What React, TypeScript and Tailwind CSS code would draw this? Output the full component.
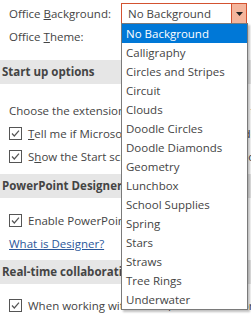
import React from "react";

const options = [
  "No Background",
  "Calligraphy",
  "Circles and Stripes",
  "Circuit",
  "Clouds",
  "Doodle Circles",
  "Doodle Diamonds",
  "Geometry",
  "Lunchbox",
  "School Supplies",
  "Spring",
  "Stars",
  "Straws",
  "Tree Rings",
  "Underwater",
];

const Check: React.FC = () => (
  <svg width="13" height="13" viewBox="0 0 13 13" className="shrink-0">
    <rect x="0.5" y="0.5" width="12" height="12" fill="#fff" stroke="#555" />
    <path d="M3 6.5 L5.3 9 L10 3.6" fill="none" stroke="#555" strokeWidth="1.2" />
  </svg>
);

const CheckRow: React.FC<{ children: React.ReactNode }> = ({ children }) => (
  <div className="flex items-center gap-[6px] h-[23px] pl-[9px] whitespace-nowrap">
    <Check />
    <span>{children}</span>
  </div>
);

const Header: React.FC<{ title: string }> = ({ title }) => (
  <div className="h-[24px] flex items-center pl-[2px] bg-[#e6e6e6] font-bold text-[#444] whitespace-nowrap">
    {title}
  </div>
);

export default function App() {
  return (
    <div
      className="relative w-[251px] h-[314px] overflow-hidden bg-white text-[11.5px] text-[#444]"
      style={{ fontFamily: '"Open Sans", "Noto Sans", sans-serif' }}
    >
      <div className="w-[600px]">
        <div className="flex items-center h-[25px] pt-[2px]">
          <span className="pl-[9px] w-[121px]">
            Office <u>B</u>ackground:
          </span>
          <div className="flex h-[21px] w-[126px] border border-[#d35230] bg-white">
            <span className="flex-1 pl-[6px] leading-[19px]">No Background</span>
            <span className="w-[15px] bg-[#f4b59c] border-l border-[#d35230] flex items-center justify-center">
              <svg width="7" height="4" viewBox="0 0 7 4">
                <path d="M0 0 H7 L3.5 4 Z" fill="#222" />
              </svg>
            </span>
          </div>
        </div>
        <div className="h-[23px] flex items-center pl-[9px]">
          <span>
            Office <u>T</u>heme:
          </span>
        </div>
        <div className="h-[12px]" />
        <Header title="Start up options" />
        <div className="h-[15px]" />
        <div className="h-[23px] flex items-center pl-[9px] whitespace-nowrap">
          Choose the extensions you want PowerPoint to open by default:
        </div>
        <CheckRow>
          <u>T</u>ell me if Microsoft PowerPoint isn't the default program for viewing and editing presentations
        </CheckRow>
        <CheckRow>
          S<u>h</u>ow the Start screen when this application starts
        </CheckRow>
        <div className="h-[6px]" />
        <Header title="PowerPoint Designer" />
        <div className="h-[11px]" />
        <CheckRow>Enable PowerPoint Designer</CheckRow>
        <div className="h-[23px] flex items-center pl-[9px]">
          <span className="text-[#2b579a] underline">What is Designer?</span>
        </div>
        <div className="h-[5px]" />
        <Header title="Real-time collaboration options" />
        <div className="h-[10px]" />
        <CheckRow>When working with others, I want to automatically share my changes:</CheckRow>
      </div>

      <div className="absolute left-[121px] top-[23px] w-[127px] border border-[#7a7a7a] bg-white shadow-[2px_2px_2px_rgba(0,0,0,0.25)]">
        {options.map((o, i) => (
          <div
            key={o}
            className={
              i === 0
                ? "h-[19px] leading-[19px] pl-[4px] bg-[#0078d7] text-white whitespace-nowrap"
                : "h-[19px] leading-[19px] pl-[4px] whitespace-nowrap"
            }
          >
            {o}
          </div>
        ))}
      </div>
    </div>
  );
}
